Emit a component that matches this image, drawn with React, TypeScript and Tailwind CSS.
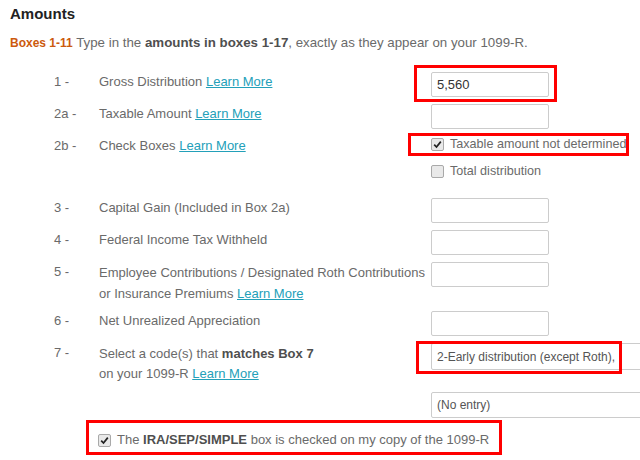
import React from 'react';

const linkCls = 'text-[#23a0b9] underline';

function Checkbox({ checked }: { checked?: boolean }) {
  return (
    <span className="inline-flex w-[13px] h-[13px] shrink-0 items-center justify-center rounded-[2px] border border-[#a9a9a9] bg-[#e9e9e9]">
      {checked && (
        <svg width="9" height="9" viewBox="0 0 9 9">
          <path d="M1.2 4.6 L3.5 7 L7.8 1.6" fill="none" stroke="#222" strokeWidth="1.7" />
        </svg>
      )}
    </span>
  );
}

function TextBox({ value }: { value?: string }) {
  return (
    <div className="w-[118px] h-[25px] rounded-[2px] border border-[#cccccc] bg-white px-[5px] flex items-center text-[#333]">
      {value}
    </div>
  );
}

function Row({ num, children, right, className = '' }: { num: string; children: React.ReactNode; right: React.ReactNode; className?: string }) {
  return (
    <div className={`flex items-start ${className}`}>
      <div className="w-[45px] shrink-0 leading-[20px]">{num}</div>
      <div className="w-[332px] shrink-0 leading-[20px]">{children}</div>
      <div>{right}</div>
    </div>
  );
}

export default function App() {
  return (
    <div className="w-[640px] h-[460px] overflow-hidden bg-white font-['Liberation_Sans',Arial,sans-serif] text-[13px] text-[#6a6a6a]">
      <div className="pl-[10px] pt-[4px]">
        <h2 className="text-[15px] font-bold text-[#222] leading-[20px]">Amounts</h2>
        <p className="mt-[9px] leading-[20px] text-[13.3px]">
          <span className="font-bold text-[#cc5a0e] text-[12px]">Boxes 1-11</span> Type in the{' '}
          <span className="font-bold text-[#4f4f4f]">amounts in boxes 1-17</span>, exactly as they appear on your 1099-R.
        </p>
      </div>

      <div className="pl-[54px] mt-[19px]">
        <Row
          num="1 -"
          right={
            <div className="relative">
              <TextBox value="5,560" />
              <span className="absolute -left-[17px] -top-[7px] -right-[8px] -bottom-[5px] border-[3px] border-[#ff0000]" />
            </div>
          }
        >
          Gross Distribution <a className={linkCls}>Learn More</a>
        </Row>

        <Row num="2a -" className="mt-[7px]" right={<TextBox />}>
          Taxable Amount <a className={linkCls}>Learn More</a>
        </Row>

        <div className="flex items-start mt-[5px]">
          <div className="w-[45px] shrink-0 leading-[20px] pt-[2px]">2b -</div>
          <div className="w-[332px] shrink-0 leading-[20px] pt-[2px]">
            Check Boxes <a className={linkCls}>Learn More</a>
          </div>
          <div className="flex flex-col gap-[7px] text-[12.6px]">
            <div className="relative flex items-center gap-[6px] leading-[20px] whitespace-nowrap">
              <Checkbox checked />
              <span>Taxable amount not determined</span>
              <span className="absolute -left-[23px] -top-[1px] -right-[3px] -bottom-[2px] border-[3px] border-[#ff0000]" />
            </div>
            <div className="flex items-center gap-[6px] leading-[20px] whitespace-nowrap">
              <Checkbox />
              <span>Total distribution</span>
            </div>
          </div>
        </div>

        <Row num="3 -" className="mt-[17px]" right={<TextBox />}>
          Capital Gain (Included in Box 2a)
        </Row>
        <Row num="4 -" className="mt-[7px]" right={<TextBox />}>
          Federal Income Tax Withheld
        </Row>
        <Row num="5 -" className="mt-[7px]" right={<TextBox />}>
          <span className="leading-[21px]">
            Employee Contributions / Designated Roth Contributions
            <br />
            or Insurance Premiums <a className={linkCls}>Learn More</a>
          </span>
        </Row>
        <Row num="6 -" className="mt-[7px]" right={<TextBox />}>
          Net Unrealized Appreciation
        </Row>

        <Row
          num="7 -"
          className="mt-[7px]"
          right={
            <div className="flex flex-col text-[12px]">
              <div className="relative">
                <div className="w-[240px] h-[27px] rounded-[2px] border border-[#cccccc] px-[5px] flex items-center text-[#555] whitespace-nowrap">
                  2-Early distribution (except Roth),
                </div>
                <span className="absolute -left-[15px] -top-[2px] right-[49px] -bottom-[4px] border-[3px] border-[#ff0000]" />
              </div>
              <div className="mt-[22px] w-[240px] h-[26px] rounded-[2px] border border-[#cccccc] px-[5px] flex items-center text-[#555]">
                (No entry)
              </div>
            </div>
          }
        >
          <div className="pt-[1px]">
            Select a code(s) that <span className="font-bold text-[#4f4f4f]">matches Box 7</span>
            <br />
            on your 1099-R <a className={linkCls}>Learn More</a>
          </div>
        </Row>

        <div className="pl-[44px] mt-[12px]">
          <div className="relative inline-flex items-center gap-[6px] leading-[20px] whitespace-nowrap">
            <Checkbox checked />
            <span>
              The <span className="font-bold text-[#4f4f4f]">IRA/SEP/SIMPLE</span> box is checked on my copy of the 1099-R
            </span>
            <span className="absolute -left-[12px] -top-[10px] -right-[13px] -bottom-[5px] border-[3px] border-[#ff0000]" />
          </div>
        </div>
      </div>
    </div>
  );
}
